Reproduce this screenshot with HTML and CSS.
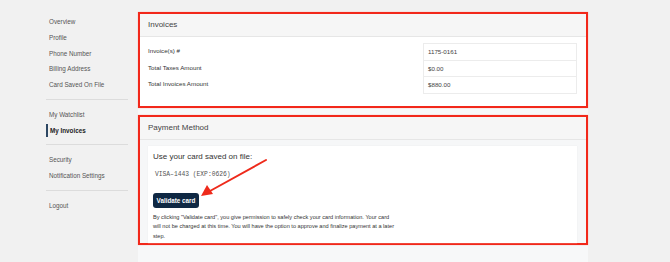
FILE: index.html
```html
<!DOCTYPE html>
<html lang="en">
<head>
    <meta charset="UTF-8">
    <title>My Invoices</title>
    <link rel="stylesheet" href="styles.css">
</head>
<body>
<div class="layout">
    <nav class="sidebar">
        <a class="nav-link" href="#">Overview</a>
        <a class="nav-link" href="#">Profile</a>
        <a class="nav-link" href="#">Phone Number</a>
        <a class="nav-link" href="#">Billing Address</a>
        <a class="nav-link" href="#">Card Saved On File</a>
        <hr class="nav-sep">
        <a class="nav-link" href="#">My Watchlist</a>
        <a class="nav-link active" href="#">My Invoices</a>
        <hr class="nav-sep">
        <a class="nav-link" href="#">Security</a>
        <a class="nav-link" href="#">Notification Settings</a>
        <hr class="nav-sep">
        <a class="nav-link" href="#">Logout</a>
    </nav>

    <main class="content">
        <section class="card marked">
            <div class="card-head">Invoices</div>
            <div class="card-body invoice-body">
                <div class="labels">
                    <div class="label">Invoice(s) #</div>
                    <div class="label">Total Taxes Amount</div>
                    <div class="label">Total Invoices Amount</div>
                </div>
                <div class="values">
                    <div class="value">1175-0161</div>
                    <div class="value">$0.00</div>
                    <div class="value">$880.00</div>
                </div>
            </div>
        </section>

        <section class="card marked">
            <div class="card-head">Payment Method</div>
            <div class="card-body pay-body">
                <div class="pay-inner">
                    <h3 class="pay-title">Use your card saved on file:</h3>
                    <div class="card-number">VISA&ndash;1443 (EXP:0626)</div>
                    <button class="btn-validate" type="button">Validate card</button>
                    <p class="pay-note">
                        By clicking "Validate card", you give permission to safely check your card information. Your card
                        will not be charged at this time. You will have the option to approve and finalize payment at a later
                        step.
                    </p>
                    <svg class="arrow" width="70" height="44" viewBox="0 0 70 44">
                        <line x1="68" y1="2" x2="12" y2="33" stroke="#ee2a1b" stroke-width="2" stroke-linecap="round"/>
                        <polygon points="3,38 9,27 15,36" fill="#ee2a1b"/>
                    </svg>
                </div>
            </div>
        </section>
    </main>
</div>
</body>
</html>
```

FILE: styles.css
```css
body {
    margin: 0;
    font-family: "Liberation Sans", Arial, Helvetica, sans-serif;
    color: #333;
    background-color: #f1f1f1;
    height: 262px;
    overflow: hidden;
}

.layout {
    display: flex;
    gap: 10px;
    padding-left: 46px;
}

/* sidebar */
.sidebar {
    width: 82px;
    padding-top: 14px;
    display: flex;
    flex-direction: column;
}

.nav-link {
    display: block;
    padding-left: 3px;
    font-size: 6.3px;
    line-height: 15.75px;
    color: #555;
    text-decoration: none;
    white-space: nowrap;
}

.nav-link.active {
    margin: 1px 0;
    padding-left: 2px;
    line-height: 13.75px;
    border-left: 2px solid #2d4763;
    color: #222;
    font-weight: bold;
}

.nav-sep {
    width: 100%;
    margin: 6px 0 7px;
    border: 0;
    border-top: 1px solid #dcdcdc;
}

/* main column */
.content {
    width: 450px;
    margin-top: 12px;
    min-height: 260px;
    background-color: #f7f8f9;
    display: flex;
    flex-direction: column;
    gap: 7px;
}

.card {
    background-color: #fff;
}

.card.marked {
    border: 2px solid #f2281a;
    box-shadow: 0 0 1px #f7a199;
}

.card-head {
    height: 22px;
    line-height: 22px;
    padding-left: 8px;
    font-size: 8px;
    color: #444;
    background-color: #f6f6f6;
    border-bottom: 1px solid #e6e6e6;
}

.invoice-body {
    display: flex;
    justify-content: space-between;
    padding: 6px 9px 12px 8px;
}

.label {
    font-size: 6.2px;
    line-height: 16.5px;
    color: #333;
}

.values {
    width: 152px;
    border: 1px solid #ececec;
}

.value {
    height: 15.5px;
    line-height: 15.5px;
    padding-left: 4px;
    font-size: 6.2px;
    color: #444;
    border-top: 1px solid #ececec;
}

.value:first-child {
    border-top: 0;
}

/* payment */
.pay-body {
    padding: 6px 9px 0 8px;
    background-color: #f6f7f8;
}

.pay-inner {
    position: relative;
    padding: 6px 5px 2px;
    background-color: #fff;
    box-shadow: 0 0 1px #e4e6e8;
}

.pay-title {
    margin: 0;
    font-size: 8px;
    line-height: 10px;
    font-weight: normal;
    color: #333;
}

.card-number {
    margin-top: 8px;
    padding-left: 2px;
    font-family: "Liberation Mono", "DejaVu Sans Mono", monospace;
    font-size: 6.3px;
    line-height: 10px;
    color: #555;
}

.btn-validate {
    display: block;
    margin-top: 13px;
    width: 46px;
    height: 15px;
    padding: 0;
    border: 0;
    border-radius: 3px;
    background-color: #0f2843;
    color: #fff;
    font-family: inherit;
    font-size: 6.3px;
    font-weight: 600;
}

.pay-note {
    width: 245px;
    margin: 5px 0 0;
    font-size: 5.6px;
    line-height: 9.5px;
    color: #333;
}

.arrow {
    position: absolute;
    left: 50px;
    top: 12px;
}
```
